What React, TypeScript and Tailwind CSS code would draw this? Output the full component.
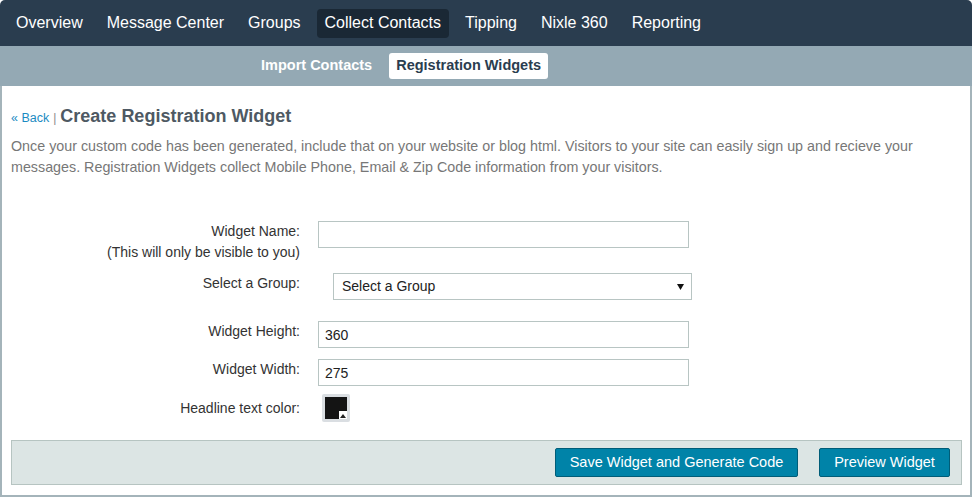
import React from 'react';

const navItems = ['Overview', 'Message Center', 'Groups', 'Collect Contacts', 'Tipping', 'Nixle 360', 'Reporting'];

function ColorSwatch() {
  return (
    <div className="w-[28px] h-[28px] bg-[#dadee2] rounded-[2px] p-[3px]">
      <div className="relative w-[22px] h-[22px] bg-[#141414]">
        <div className="absolute right-0 bottom-0 w-[8px] h-[8px] bg-white flex items-end justify-center">
          <svg width="6" height="4" viewBox="0 0 6 4" className="mb-[1px]">
            <path d="M0 4 L3 0 L6 4 Z" fill="#222" />
          </svg>
        </div>
      </div>
    </div>
  );
}

export default function App() {
  return (
    <div className="w-[973px] h-[497px] bg-white font-['Liberation_Sans',Arial,sans-serif]">
      <div className="w-[972px] h-[497px] flex flex-col rounded-t-[5px] overflow-hidden">
        {/* Main nav */}
        <nav className="h-[46px] bg-[#2a3d4f] flex items-center pl-2">
          {navItems.map((item) => (
            <div
              key={item}
              className={`px-2 h-[29px] mr-2 flex items-center text-[16px] text-white rounded-[4px] ${
                item === 'Collect Contacts' ? 'bg-[#1a2835]' : ''
              }`}
            >
              {item}
            </div>
          ))}
        </nav>

        {/* Sub nav */}
        <div className="h-[40px] bg-[#94a9b4] flex items-center pl-[253px] gap-[9px]">
          <div className="px-2 text-[14.5px] font-bold text-white">Import Contacts</div>
          <div className="h-[26px] px-[7px] flex items-center bg-white rounded-[3px] text-[14.5px] font-bold text-[#2a3d4f]">
            Registration Widgets
          </div>
        </div>

        {/* Content */}
        <div className="flex-1 border-x-2 border-b-2 border-[#a4b4ba] pl-[9px] pr-[8px] flex flex-col">
          <div className="mt-[17px] flex items-baseline">
            <a className="text-[12.5px] text-[#1b8bc2]">« Back</a>
            <span className="text-[12px] text-[#888] mx-[4px]">|</span>
            <h1 className="text-[18px] font-bold text-[#4e5963]">Create Registration Widget</h1>
          </div>
          <p className="mt-[6px] text-[14.3px] leading-[21px] text-[#777] pr-[30px]">
            Once your custom code has been generated, include that on your website or blog html. Visitors to your site can easily sign up and recieve your messages. Registration Widgets collect Mobile Phone, Email &amp; Zip Code information from your visitors.
          </p>

          <div className="mt-[43px] flex flex-col text-[14px] leading-[21px] text-[#333]">
            <div className="flex">
              <div className="w-[289px] text-right">
                <div>Widget Name:</div>
                <div>(This will only be visible to you)</div>
              </div>
              <input
                type="text"
                className="ml-[18px] w-[371px] h-[27px] border border-[#b8c5c3] px-[6px] text-[14px] outline-none"
              />
            </div>

            <div className="flex mt-[10px]">
              <div className="w-[289px] text-right">Select a Group:</div>
              <div className="ml-[33px] w-[359px] h-[27px] border border-[#b8c5c3] flex items-center justify-between pl-[8px] pr-[7px] text-[#222]">
                <span>Select a Group</span>
                <svg width="7" height="6" viewBox="0 0 7 6">
                  <path d="M0 0 L7 0 L3.5 6 Z" fill="#111" />
                </svg>
              </div>
            </div>

            <div className="flex mt-[21px]">
              <div className="w-[289px] text-right">Widget Height:</div>
              <input
                type="text"
                defaultValue="360"
                className="ml-[18px] w-[371px] h-[27px] border border-[#b8c5c3] px-[6px] text-[14px] text-[#222] outline-none"
              />
            </div>

            <div className="flex mt-[11px]">
              <div className="w-[289px] text-right">Widget Width:</div>
              <input
                type="text"
                defaultValue="275"
                className="ml-[18px] w-[371px] h-[27px] border border-[#b8c5c3] px-[6px] text-[14px] text-[#222] outline-none"
              />
            </div>

            <div className="flex items-center mt-[8px]">
              <div className="w-[289px] text-right">Headline text color:</div>
              <div className="ml-[22px]">
                <ColorSwatch />
              </div>
            </div>
          </div>

          {/* Footer actions */}
          <div className="mt-[18px] h-[45px] bg-[#dce5e4] border border-[#b6c4c1] flex items-center justify-end pr-[11px] gap-[21px]">
            <button className="w-[243px] h-[29px] bg-[#0083a8] border border-[#005d78] rounded-[2px] text-white text-[14.5px]">
              Save Widget and Generate Code
            </button>
            <button className="w-[131px] h-[29px] bg-[#0083a8] border border-[#005d78] rounded-[2px] text-white text-[14.5px]">
              Preview Widget
            </button>
          </div>
        </div>
      </div>
    </div>
  );
}
